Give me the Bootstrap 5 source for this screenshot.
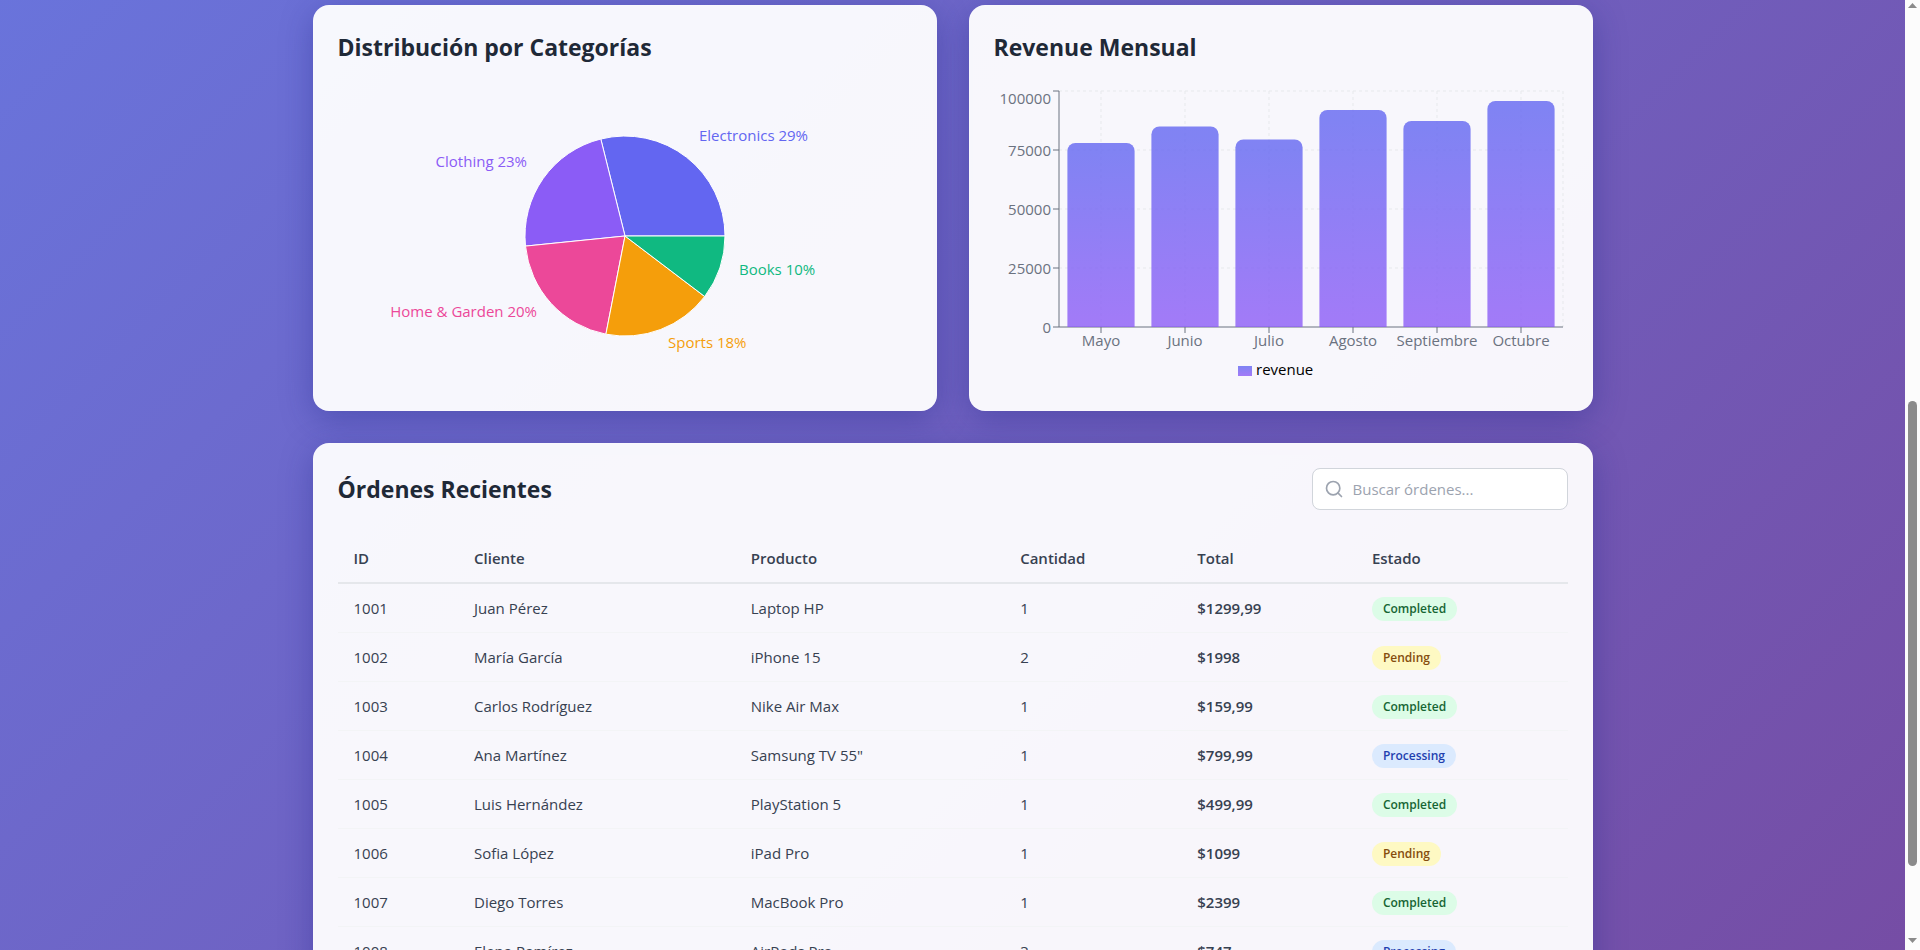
<!DOCTYPE html>
<html lang="es">
<head>
<meta charset="utf-8">
<meta name="viewport" content="width=device-width, initial-scale=1">
<title>Dashboard de Ventas</title>
<link href="https://cdn.jsdelivr.net/npm/bootstrap@5.3.0/dist/css/bootstrap.min.css" rel="stylesheet">
<style>
  body { font-family: "Open Sans", "Noto Sans", sans-serif; font-size: 15px; line-height: 24px; color: #374151; }
  .app-view { background: linear-gradient(135deg, #667eea 0%, #764ba2 100%) 0 85% / 100% 197% no-repeat; }
  .app-wrap { max-width: 1280px; padding-top: 5px; gap: 32px; }
  .panel-grid { display: grid; grid-template-columns: 1fr 1fr; gap: 32px; }
  .panel { background: rgba(255, 255, 255, .95); border: 1px solid rgba(255, 255, 255, .2); border-radius: 16px; box-shadow: 0 8px 32px rgba(31, 38, 135, .37); }
  .panel-title { font-size: 23px; line-height: 34px; margin-bottom: 22px; font-weight: 700; color: #1f2937; }
  .chart { display: block; width: 100%; height: 300px; font-size: 15px; }
  .search-box { width: 256px; }
  .search-box svg { position: absolute; left: 12px; top: 11px; }
  .search-box input { height: 42px; padding: 8px 16px 8px 40px; border: 1px solid #d1d5db; border-radius: 8px; font-size: 15px; }
  .search-box input::placeholder { color: #9ca3af; }
  .orders { table-layout: fixed; width: 100%; border-collapse: separate; border-spacing: 0; }
  .orders th, .orders td { padding: 12px 16px; line-height: 24px; }
  .orders th { font-weight: 600; border-bottom: 2px solid #e5e7eb; }
  .orders td { border-bottom: 1px solid #f3f4f6; }
  .orders th:nth-child(1) { width: 9.8%; }
  .orders th:nth-child(2) { width: 22.5%; }
  .orders th:nth-child(3) { width: 21.9%; }
  .orders th:nth-child(4) { width: 14.4%; }
  .orders th:nth-child(5) { width: 14.2%; }
  .status { display: inline-block; vertical-align: top; padding: 4px 11px; margin-top: 1px; margin-bottom: -1px; border-radius: 12px; font-size: 12px; line-height: 16px; font-weight: 600; }
  .status-done { background: #dcfce7; color: #166534; }
  .status-wait { background: #fef9c3; color: #854d0e; }
  .status-work { background: #dbeafe; color: #1e40af; }
  .scroll-rail { width: 15px; background: #fcfcfc; padding: 3px 0 7px; }
  .scroll-thumb { width: 9px; background: #8b8b8b; border-radius: 5px; flex: 465; }
  .rail-before { flex: 393; }
  .rail-after { flex: 72; }
</style>
</head>
<body>
<div class="d-flex vh-100 overflow-hidden">
  <main class="app-view flex-grow-1 overflow-hidden">
    <div class="app-wrap d-flex flex-column mx-auto">
      <div class="panel-grid">
        <section class="panel p-4">
          <h2 class="panel-title">Distribución por Categorías</h2>
          <svg class="chart" viewBox="0 0 574 300" role="img" aria-label="Distribución por categorías">
            <g stroke="#fff" stroke-width="1" transform="translate(287 150)">
              <path fill="#6366f1" d="M0 0L100 0A100 100 0 0 0 -24.2 -97Z"/>
              <path fill="#8b5cf6" d="M0 0L-24.2 -97A100 100 0 0 0 -99.5 10.1Z"/>
              <path fill="#ec4899" d="M0 0L-99.5 10.1A100 100 0 0 0 -19.1 98.2Z"/>
              <path fill="#f59e0b" d="M0 0L-19.1 98.2A100 100 0 0 0 79.7 60.5Z"/>
              <path fill="#10b981" d="M0 0L79.7 60.5A100 100 0 0 0 100 0Z"/>
            </g>
            <text x="361" y="55" fill="#6366f1">Electronics 29%</text>
            <text x="189" y="81" fill="#8b5cf6" text-anchor="end">Clothing 23%</text>
            <text x="199" y="231" fill="#ec4899" text-anchor="end">Home &amp; Garden 20%</text>
            <text x="330" y="262" fill="#f59e0b">Sports 18%</text>
            <text x="401" y="189" fill="#10b981">Books 10%</text>
          </svg>
        </section>
        <section class="panel p-4">
          <h2 class="panel-title">Revenue Mensual</h2>
          <svg class="chart" viewBox="0 0 574 300" role="img" aria-label="Revenue mensual">
            <defs>
              <linearGradient id="barFill" x1="0" y1="0" x2="0" y2="1">
                <stop offset="5%" stop-color="#6366f1" stop-opacity=".8"/>
                <stop offset="95%" stop-color="#8b5cf6" stop-opacity=".8"/>
              </linearGradient>
            </defs>
            <path fill="none" stroke="#e5e7eb" stroke-opacity=".9" stroke-dasharray="3 3" d="M65 5H569M65 64H569M65 123H569M65 182H569M107 5V241M191 5V241M275 5V241M359 5V241M443 5V241M527 5V241M569 5V241"/>
            <path fill="none" stroke="#6b7280" d="M65 241H569M107 241V247M191 241V247M275 241V247M359 241V247M443 241V247M527 241V247M65 5V241M59 5H65M59 64H65M59 123H65M59 182H65M59 241H65"/>
            <g fill="url(#barFill)">
              <path d="M73.4 241V64.9a8 8 0 0 1 8-8h51.2a8 8 0 0 1 8 8V241Z"/>
              <path d="M157.4 241V48.4a8 8 0 0 1 8-8h51.2a8 8 0 0 1 8 8V241Z"/>
              <path d="M241.4 241V61.4a8 8 0 0 1 8-8h51.2a8 8 0 0 1 8 8V241Z"/>
              <path d="M325.4 241V31.9a8 8 0 0 1 8-8h51.2a8 8 0 0 1 8 8V241Z"/>
              <path d="M409.4 241V43a8 8 0 0 1 8-8h51.2a8 8 0 0 1 8 8V241Z"/>
              <path d="M493.4 241V22.9a8 8 0 0 1 8-8h51.2a8 8 0 0 1 8 8V241Z"/>
            </g>
            <g fill="#6b7280" text-anchor="end">
              <text x="57" y="18">100000</text>
              <text x="57" y="70">75000</text>
              <text x="57" y="129">50000</text>
              <text x="57" y="188">25000</text>
              <text x="57" y="247">0</text>
            </g>
            <g fill="#6b7280" text-anchor="middle">
              <text x="107" y="260">Mayo</text>
              <text x="191" y="260">Junio</text>
              <text x="275" y="260">Julio</text>
              <text x="359" y="260">Agosto</text>
              <text x="443" y="260">Septiembre</text>
              <text x="527" y="260">Octubre</text>
            </g>
            <rect x="244" y="280" width="14" height="10" fill="url(#barFill)"/>
            <text x="262" y="289" fill="#000">revenue</text>
          </svg>
        </section>
      </div>
      <section class="panel p-4">
        <div class="d-flex justify-content-between align-items-center mb-4">
          <h2 class="panel-title mb-0">Órdenes Recientes</h2>
          <div class="search-box position-relative">
            <svg width="20" height="20" viewBox="0 0 24 24" fill="none" stroke="#9ca3af" stroke-width="2" stroke-linecap="round" stroke-linejoin="round" aria-hidden="true"><circle cx="11" cy="11" r="8"/><path d="m21 21-4.35-4.35"/></svg>
            <input type="text" class="form-control" placeholder="Buscar órdenes..." aria-label="Buscar órdenes">
          </div>
        </div>
        <table class="orders">
          <thead>
            <tr><th scope="col">ID</th><th scope="col">Cliente</th><th scope="col">Producto</th><th scope="col">Cantidad</th><th scope="col">Total</th><th scope="col">Estado</th></tr>
          </thead>
          <tbody>
            <tr><td>1001</td><td>Juan Pérez</td><td>Laptop HP</td><td>1</td><td class="fw-semibold">$1299,99</td><td><span class="status status-done">Completed</span></td></tr>
            <tr><td>1002</td><td>María García</td><td>iPhone 15</td><td>2</td><td class="fw-semibold">$1998</td><td><span class="status status-wait">Pending</span></td></tr>
            <tr><td>1003</td><td>Carlos Rodríguez</td><td>Nike Air Max</td><td>1</td><td class="fw-semibold">$159,99</td><td><span class="status status-done">Completed</span></td></tr>
            <tr><td>1004</td><td>Ana Martínez</td><td>Samsung TV 55"</td><td>1</td><td class="fw-semibold">$799,99</td><td><span class="status status-work">Processing</span></td></tr>
            <tr><td>1005</td><td>Luis Hernández</td><td>PlayStation 5</td><td>1</td><td class="fw-semibold">$499,99</td><td><span class="status status-done">Completed</span></td></tr>
            <tr><td>1006</td><td>Sofia López</td><td>iPad Pro</td><td>1</td><td class="fw-semibold">$1099</td><td><span class="status status-wait">Pending</span></td></tr>
            <tr><td>1007</td><td>Diego Torres</td><td>MacBook Pro</td><td>1</td><td class="fw-semibold">$2399</td><td><span class="status status-done">Completed</span></td></tr>
            <tr><td>1008</td><td>Elena Ramírez</td><td>AirPods Pro</td><td>3</td><td class="fw-semibold">$747</td><td><span class="status status-work">Processing</span></td></tr>
          </tbody>
        </table>
      </section>
    </div>
  </main>
  <div class="scroll-rail d-flex flex-column align-items-center flex-shrink-0" aria-hidden="true">
    <svg width="9" height="5" viewBox="0 0 9 5"><path fill="#8b8b8b" d="M4.500 0L9 5H0Z"/></svg>
    <div class="rail-before"></div>
    <div class="scroll-thumb"></div>
    <div class="rail-after"></div>
    <svg width="9" height="5" viewBox="0 0 9 5"><path fill="#8b8b8b" d="M0 0H9L4.500 5Z"/></svg>
  </div>
</div>
<script src="https://cdn.jsdelivr.net/npm/bootstrap@5.3.0/dist/js/bootstrap.bundle.min.js"></script>
</body>
</html>
